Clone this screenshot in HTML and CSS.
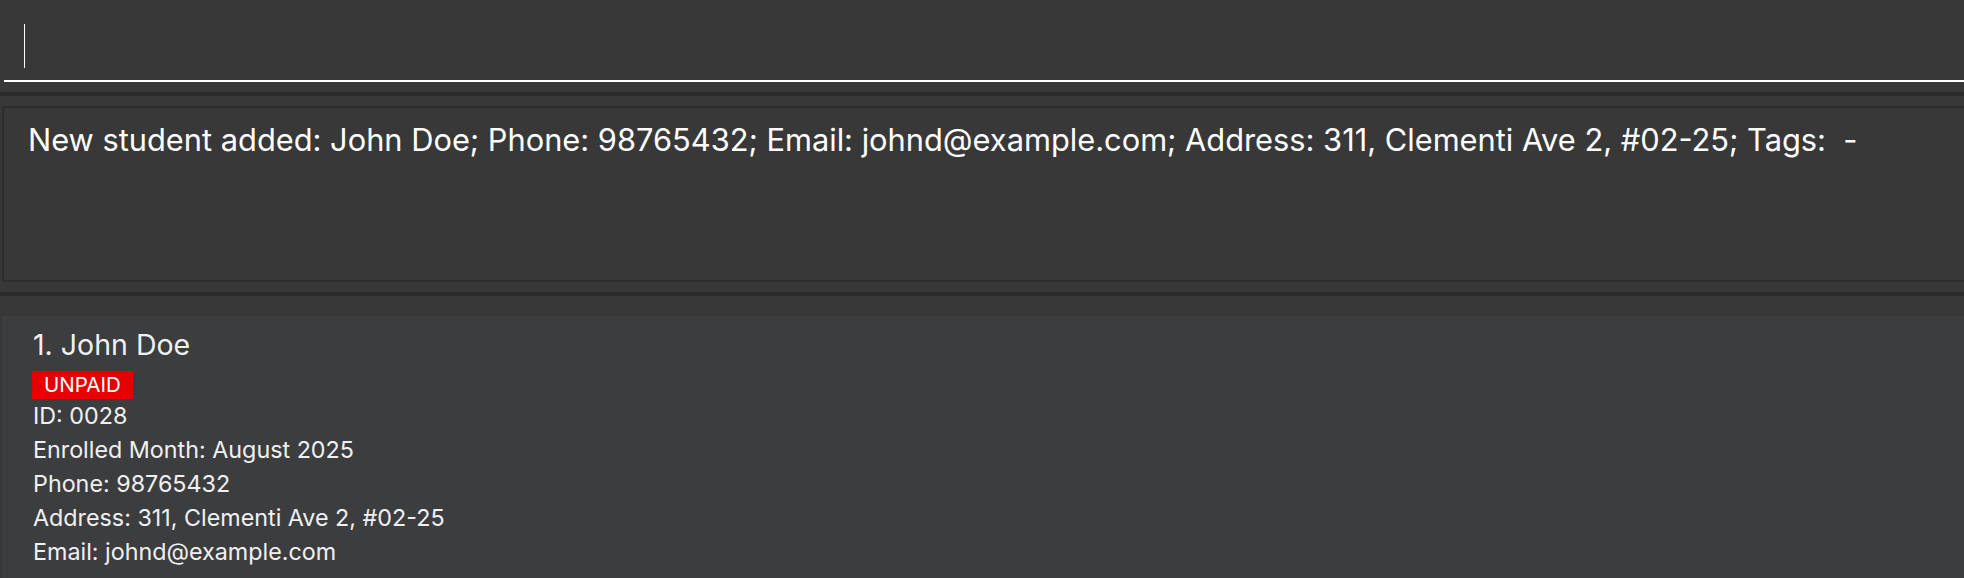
FILE: index.html
```html
<!DOCTYPE html>
<html>
<head>
<meta charset="utf-8">
<link rel="stylesheet" href="styles.css">
</head>
<body>
<div class="app">
  <div class="command-area">
    <div class="command-field">
      <span class="caret"></span>
    </div>
  </div>
  <div class="divider"></div>
  <div class="result-area">
    <div class="result-box">New student added: John Doe; Phone: 98765432; Email: johnd@example.com; Address: 311, Clementi Ave 2, #02-25; Tags:&nbsp; -</div>
  </div>
  <div class="divider"></div>
  <div class="list-area">
    <div class="card">
      <div class="name">1. John Doe</div>
      <div class="tags"><span class="badge unpaid">UNPAID</span></div>
      <div class="field">ID: 0028</div>
      <div class="field">Enrolled Month: August 2025</div>
      <div class="field">Phone: 98765432</div>
      <div class="field">Address: 311, Clementi Ave 2, #02-25</div>
      <div class="field">Email: johnd@example.com</div>
    </div>
  </div>
</div>
</body>
</html>
```

FILE: styles.css
```css
html, body {
  margin: 0;
  padding: 0;
  background: #383838;
  overflow: hidden;
}
body {
  width: 1964px;
  height: 578px;
  font-family: "Inter", "Liberation Sans", sans-serif;
  color: #ffffff;
}
.app {
  display: flex;
  flex-direction: column;
  height: 100%;
}
.command-area {
  height: 92px;
  padding: 0 0 0 4px;
  box-sizing: border-box;
}
.command-field {
  height: 82px;
  border-bottom: 2px solid #ffffff;
  box-sizing: border-box;
  padding: 24px 0 0 20px;
}
.caret {
  display: block;
  width: 1px;
  height: 44px;
  background: #ffffff;
}
.divider {
  height: 4px;
  background: #2b2b2b;
  flex: none;
}
.result-area {
  height: 196px;
  padding: 10px 0 0 2px;
  box-sizing: border-box;
}
.result-box {
  width: 2000px;
  height: 176px;
  box-sizing: border-box;
  border: 2px solid #2d2d2d;
  padding: 12px 0 0 24px;
  font-size: 30.8px;
  line-height: 40px;
  white-space: nowrap;
}
.list-area {
  flex: 1;
  padding: 20px 0 0 2px;
}
.card {
  background: #3c3d3f;
  height: 100%;
  padding: 10px 0 0 31px;
  box-sizing: border-box;
}
.name {
  font-size: 28.5px;
  line-height: 38px;
  color: #f0f0f0;
}
.tags {
  display: flex;
  margin: 7px 0 0 -1px;
}
.badge {
  display: inline-block;
  height: 28px;
  line-height: 28px;
  padding: 0 12px;
  font-size: 20.5px;
  color: #ffffff;
}
.unpaid {
  background: #e60000;
}
.field {
  font-size: 23.3px;
  line-height: 34px;
  color: #f0f0f0;
}
```
